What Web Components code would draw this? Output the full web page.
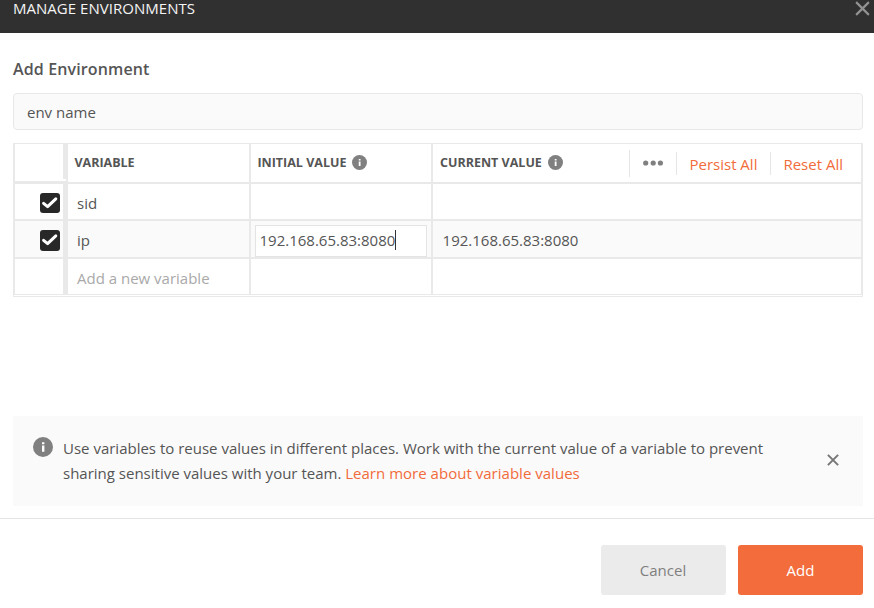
<!DOCTYPE html>
<html lang="en"><head><meta charset="utf-8"><title>Manage Environments</title>
<style>html,body{margin:0;height:100%;overflow:hidden;background:#fff}</style></head>
<body><env-dialog></env-dialog>
<script>
const define = (name, html) => customElements.define(name, class extends HTMLElement {
  constructor() {
    super();
    const t = document.createElement('template');
    t.innerHTML = html;
    this.attachShadow({mode: 'open'}).append(t.content.cloneNode(true));
  }
});

define('info-icon', `<style>:host{display:block;flex:none;width:15px;height:15px}svg{display:block;width:100%;height:100%}</style>
<svg viewBox="0 0 20 20"><circle cx="10" cy="10" r="10" fill="#808080"/><path d="M9 8.5h2.4v6.3H9zM9 5.2h2.4v2.1H9z" fill="#fff"/></svg>`);

define('close-icon', `<style>:host{display:block;flex:none;width:12px;height:12px}svg{display:block;width:100%;height:100%;overflow:visible}path{stroke-width:var(--w,2)}</style>
<svg viewBox="0 0 12 12"><path d="M.9.9l10.2 10.2M11.1.9L.9 11.1" fill="none" stroke="currentColor"/></svg>`);

define('check-box', `<style>:host{display:block;flex:none;width:20px;height:20px;margin:2px 3px 0 0;border-radius:3px;background:#282828}:host([tall]){height:21px}svg{display:block}</style>
<svg width="20" height="20" viewBox="0 0 20 20"><path d="M3.6 10.3l4 3.4 8.2-7.9" fill="none" stroke="#fff" stroke-width="3" stroke-linecap="round" stroke-linejoin="round"/></svg>`);

define('dialog-header', `<style>:host{display:flex;justify-content:space-between;align-items:flex-start;height:33px;background:#303030;color:#f4f4f4;padding:0 4px 0 13px;box-sizing:border-box;font-size:15px;line-height:16px;font-weight:500}
close-icon{width:15px;height:15px;margin-top:.5px;color:#929292;--w:1.7}span{letter-spacing:.03px}</style><span><slot></slot></span><close-icon></close-icon>`);

define('name-field', `<style>:host{display:flex;align-items:center;height:37px;box-sizing:border-box;border:1px solid #e8e8e8;border-radius:4px;background:#fafafa;padding:0 13px}</style><slot></slot>`);

define('table-row', `<style>:host{display:grid;grid-template-columns:55px 183px 182px 1fr}</style><slot></slot>`);

define('table-cell', `<style>:host{display:flex;align-items:center;min-width:0;box-sizing:border-box;border-right:2px solid #e9e9e9;border-bottom:2px solid #e9e9e9;padding:3px 0 0 9px}
:host([kind=check]){border-left:2px solid #e9e9e9;border-right-width:5px;justify-content:flex-end;padding:0}
:host([notch]){position:relative;border-bottom-width:3px}
:host([notch])::after{content:"";position:absolute;right:-3px;bottom:0;width:3px;height:2px;background:#fff}
:host([kind=mid]){padding-top:2px}
:host([kind=value]){padding:1px 0 0 9.6px}
:host([kind=edit]){padding:4px 4px 0}
:host([kind=head]){padding:0 0 0 6.4px;font-size:12.5px;font-weight:700;gap:6px}
:host([wide]){padding-left:7px!important}
:host([last]){border-bottom-width:1px}</style><slot></slot>`);

define('value-editor', `<style>:host{display:flex;align-items:center;width:172px;height:32px;box-sizing:border-box;border:1px solid #e4e4e4;background:#fff;padding:0 3.5px 2px}
i{width:1px;height:20px;background:#333}</style><slot></slot><i></i>`);

define('table-actions', `<style>:host{display:flex;align-items:center;margin-left:auto;padding-right:18px;font-size:15px;font-weight:400;color:#f26b3a}
i{width:1px;height:23px;background:#e6e6e6}i.a{height:27px}svg{margin:0 13px}.p{margin:1px 13px 0 12px}.r{margin:1px 0 0 12px}</style>
<i class="a"></i><svg width="20" height="6" viewBox="0 0 20 6"><g fill="#808080"><circle cx="2.7" cy="3" r="2.6"/><circle cx="10.2" cy="3" r="2.6"/><circle cx="17.4" cy="3" r="2.6"/></g></svg><i></i><span class="p">Persist All</span><i></i><span class="r">Reset All</span>`);

define('variable-table', `<style>:host{display:grid;grid-template-rows:40px 37px 38px 36px;height:154px;box-sizing:border-box;border-top:1px solid #e9e9e9;border-bottom:1px solid #e9e9e9;box-shadow:inset 1px 0 #e9e9e9,inset -1px 0 #e9e9e9}
.on{background:#fafafa}.muted{color:#a9a9a9}info-icon{margin-top:-1px}</style>
<table-row><table-cell kind="check" notch></table-cell><table-cell kind="head">VARIABLE</table-cell><table-cell kind="head"><span>INITIAL VALUE</span><info-icon></info-icon></table-cell><table-cell kind="head" wide><span>CURRENT VALUE</span><info-icon></info-icon><table-actions></table-actions></table-cell></table-row>
<table-row><table-cell kind="check"><check-box></check-box></table-cell><table-cell>sid</table-cell><table-cell></table-cell><table-cell></table-cell></table-row>
<table-row class="on"><table-cell kind="check"><check-box tall></check-box></table-cell><table-cell kind="mid">ip</table-cell><table-cell kind="edit"><value-editor>192.168.65.83:8080</value-editor></table-cell><table-cell kind="value">192.168.65.83:8080</table-cell></table-row>
<table-row><table-cell kind="check" last></table-cell><table-cell class="muted" last>Add a new variable</table-cell><table-cell last></table-cell><table-cell last></table-cell></table-row>`);

define('info-banner', `<style>:host{display:flex;height:90px;box-sizing:border-box;background:#fafafa;padding:20px 24px 0 20px;line-height:25px}
info-icon{width:20px;height:20px;margin:1px 10px 0 0}p{margin:0;flex:1;white-space:nowrap}b{font-weight:400;color:#f26b3a;letter-spacing:.02px}close-icon{margin-top:18px;color:#777}</style>
<info-icon></info-icon><p>Use variables to reuse values in different places. Work with the current value of a variable to prevent<br>sharing sensitive values with your team. <b>Learn more about variable values</b></p><close-icon></close-icon>`);

define('push-button', `<style>:host{display:flex;align-items:center;justify-content:center;width:125px;height:50px;box-sizing:border-box;padding-right:1px;border-radius:3px;background:#ebebeb;color:#808080}
:host([primary]){background:#f36c3b;color:#fff;padding:0}</style><slot></slot>`);

define('env-dialog', `<style>:host{display:flex;flex-direction:column;height:608px;font-family:"Open Sans","Noto Sans",sans-serif;font-size:15px;line-height:20px;color:#555}
main{display:flex;flex-direction:column;height:485px;box-sizing:border-box;padding:26px 11px 12px 13px}
h2{margin:0 0 14px;font-size:16px;line-height:20px;font-weight:600;letter-spacing:.13px}
variable-table{margin-top:13px}info-banner{margin-top:auto}
footer{display:flex;justify-content:flex-end;gap:12px;height:90px;box-sizing:border-box;border-top:1px solid #e6e6e6;padding:26px 11px 0}</style>
<dialog-header>MANAGE ENVIRONMENTS</dialog-header>
<main><h2>Add Environment</h2><name-field>env name</name-field><variable-table></variable-table><info-banner></info-banner></main>
<footer><push-button>Cancel</push-button><push-button primary>Add</push-button></footer>`);
</script></body></html>
